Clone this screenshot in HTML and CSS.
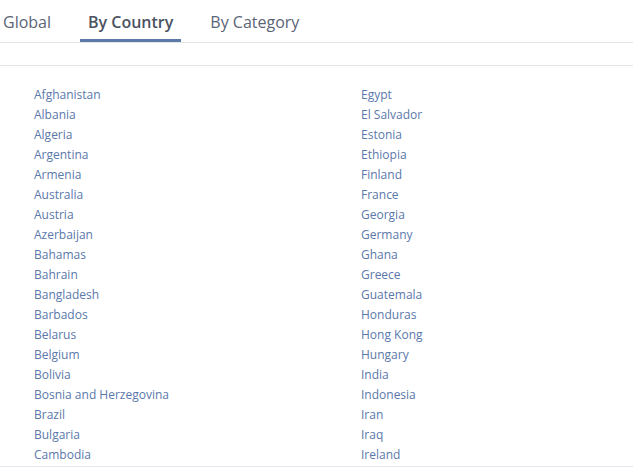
FILE: index.html
```html
<!DOCTYPE html>
<html>
<head>
<meta charset="utf-8">
<link rel="stylesheet" href="styles.css">
</head>
<body>
<nav class="tabs">
  <a class="tab">Global</a>
  <a class="tab active">By Country</a>
  <a class="tab">By Category</a>
</nav>
<div class="spacer"></div>
<div class="list">
  <ul class="col">
    <li><a>Afghanistan</a></li>
    <li><a>Albania</a></li>
    <li><a>Algeria</a></li>
    <li><a>Argentina</a></li>
    <li><a>Armenia</a></li>
    <li><a>Australia</a></li>
    <li><a>Austria</a></li>
    <li><a>Azerbaijan</a></li>
    <li><a>Bahamas</a></li>
    <li><a>Bahrain</a></li>
    <li><a>Bangladesh</a></li>
    <li><a>Barbados</a></li>
    <li><a>Belarus</a></li>
    <li><a>Belgium</a></li>
    <li><a>Bolivia</a></li>
    <li><a>Bosnia and Herzegovina</a></li>
    <li><a>Brazil</a></li>
    <li><a>Bulgaria</a></li>
    <li><a>Cambodia</a></li>
  </ul>
  <ul class="col">
    <li><a>Egypt</a></li>
    <li><a>El Salvador</a></li>
    <li><a>Estonia</a></li>
    <li><a>Ethiopia</a></li>
    <li><a>Finland</a></li>
    <li><a>France</a></li>
    <li><a>Georgia</a></li>
    <li><a>Germany</a></li>
    <li><a>Ghana</a></li>
    <li><a>Greece</a></li>
    <li><a>Guatemala</a></li>
    <li><a>Honduras</a></li>
    <li><a>Hong Kong</a></li>
    <li><a>Hungary</a></li>
    <li><a>India</a></li>
    <li><a>Indonesia</a></li>
    <li><a>Iran</a></li>
    <li><a>Iraq</a></li>
    <li><a>Ireland</a></li>
  </ul>
</div>
</body>
</html>
```
FILE: styles.css
```css
html, body {
  margin: 0;
  padding: 0;
  background: #ffffff;
  overflow: hidden;
  font-family: "Open Sans", "Noto Sans", sans-serif;
}
.tabs {
  display: flex;
  gap: 21px;
  margin-left: -5px;
  padding-top: 10px;
  border-bottom: 1px solid #e4e5ea;
}
.tab {
  display: block;
  padding: 0 8px 5px;
  font-size: 16px;
  line-height: 24px;
  color: #5b6477;
  border-bottom: 3px solid transparent;
}
.tab.active {
  font-weight: 600;
  color: #4b5261;
  border-bottom-color: #5b7aa8;
}
.spacer {
  height: 22px;
  border-bottom: 1px solid #e4e5ea;
}
.list {
  display: grid;
  grid-template-columns: 327px 1fr;
  padding: 19px 0 1px 34px;
  border-bottom: 1px solid #e2e6ef;
}
.col {
  list-style: none;
  margin: 0;
  padding: 0;
}
.col li {
  height: 20px;
  line-height: 20px;
  font-size: 12px;
}
.col a {
  color: #5a78aa;
}
```
